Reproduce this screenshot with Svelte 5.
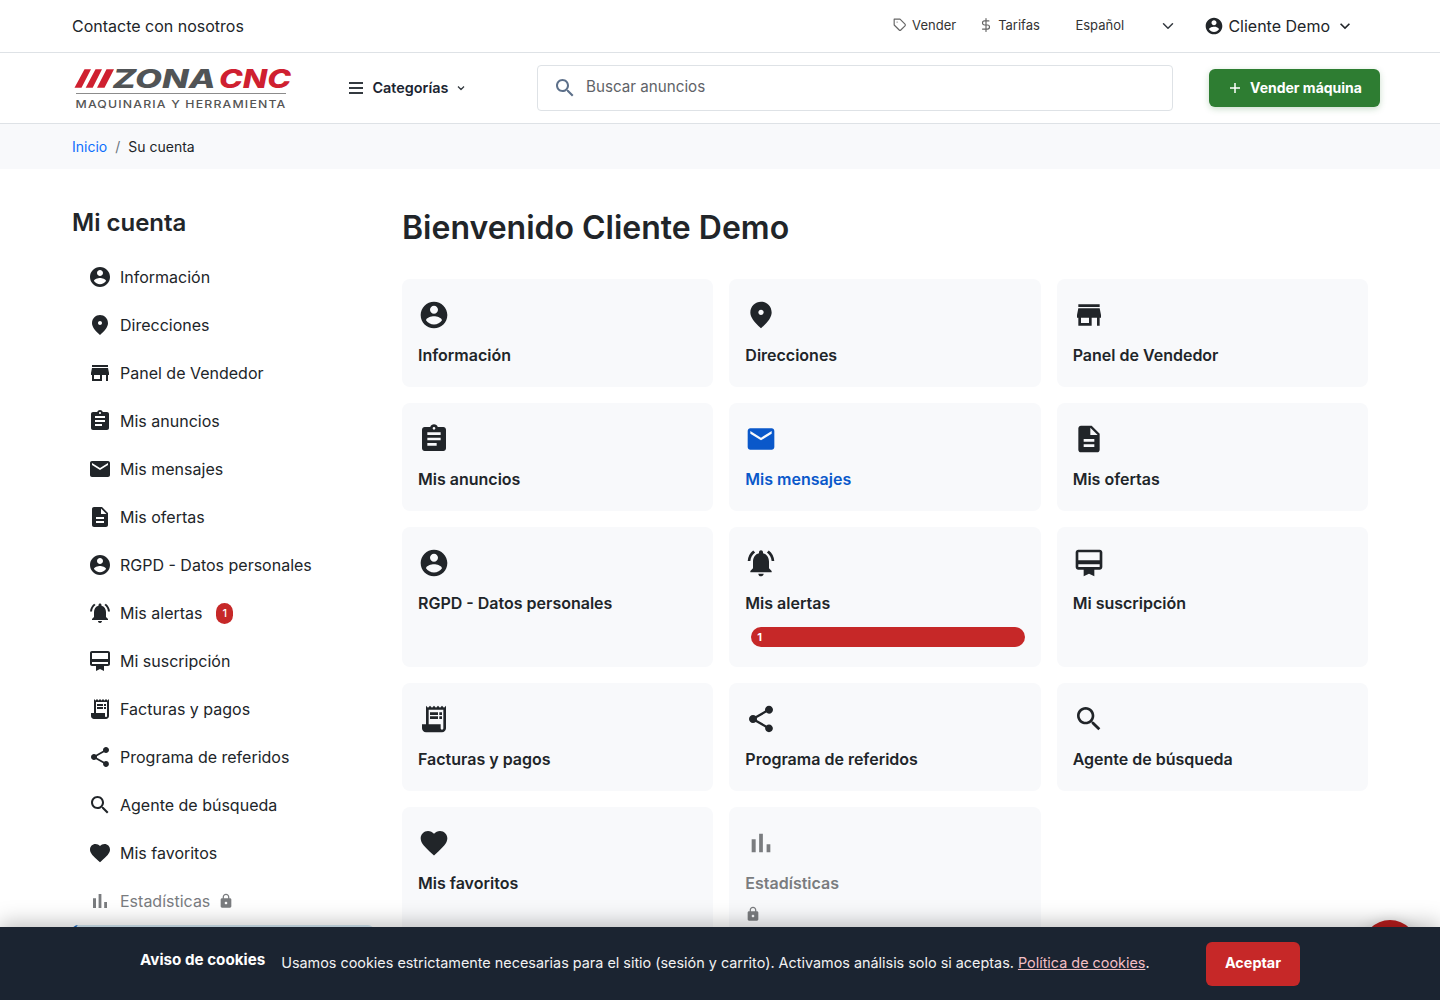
<script lang="ts">
	type Item = {
		label: string;
		icon: string;
		badge?: number;
		hover?: boolean;
		locked?: boolean;
	};

	/* 24x24 icon outlines */
	const icons: Record<string, string> = {
		account: 'M12 2C6.48 2 2 6.48 2 12s4.48 10 10 10 10-4.48 10-10S17.52 2 12 2zm0 3c1.66 0 3 1.34 3 3s-1.34 3-3 3-3-1.34-3-3 1.34-3 3-3zm0 14.2c-2.5 0-4.71-1.28-6-3.22.03-1.99 4-3.08 6-3.08 1.99 0 5.97 1.09 6 3.08-1.29 1.94-3.5 3.22-6 3.22z',
		place: 'M12 2c-4.2 0-8 3.22-8 8.2 0 3.32 2.67 7.25 8 11.8 5.33-4.55 8-8.48 8-11.8C20 5.22 16.2 2 12 2zm0 10c-1.1 0-2-.9-2-2s.9-2 2-2 2 .9 2 2-.9 2-2 2z',
		store: 'M20 4H4v2h16V4zm1 10v-2l-1-5H4l-1 5v2h1v6h10v-6h4v6h2v-6h1zm-9 4H6v-4h6v4z',
		assignment: 'M19 3h-4.18C14.4 1.84 13.3 1 12 1c-1.3 0-2.4.84-2.82 2H5c-1.1 0-2 .9-2 2v14c0 1.1.9 2 2 2h14c1.1 0 2-.9 2-2V5c0-1.1-.9-2-2-2zm-7 0c.55 0 1 .45 1 1s-.45 1-1 1-1-.45-1-1 .45-1 1-1zm2 14H7v-2h7v2zm3-4H7v-2h10v2zm0-4H7V7h10v2z',
		mail: 'M20 4H4c-1.1 0-1.99.9-1.99 2L2 18c0 1.1.9 2 2 2h16c1.1 0 2-.9 2-2V6c0-1.1-.9-2-2-2zm0 4l-8 5-8-5V6l8 5 8-5v2z',
		description: 'M14 2H6c-1.1 0-1.99.9-1.99 2L4 20c0 1.1.89 2 1.99 2H18c1.1 0 2-.9 2-2V8l-6-6zm2 16H8v-2h8v2zm0-4H8v-2h8v2zm-3-5V3.5L18.5 9H13z',
		alert: 'M7.58 4.08L6.15 2.65C3.75 4.48 2.17 7.3 2.03 10.5h2c.15-2.65 1.51-4.97 3.55-6.42zm12.39 6.42h2c-.15-3.2-1.73-6.02-4.12-7.85l-1.42 1.43c2.02 1.45 3.39 3.77 3.54 6.42zM18 11c0-3.07-1.64-5.64-4.5-6.32V4c0-.83-.67-1.5-1.5-1.5s-1.5.67-1.5 1.5v.68C7.63 5.36 6 7.92 6 11v5l-2 2v1h16v-1l-2-2v-5zm-6 11c.14 0 .27-.01.4-.04.65-.14 1.18-.58 1.44-1.18.1-.24.15-.5.15-.78h-4c.01 1.1.9 2 2.01 2z',
		membership: 'M20 2H4c-1.11 0-2 .89-2 2v11c0 1.11.89 2 2 2h4v5l4-2 4 2v-5h4c1.11 0 2-.89 2-2V4c0-1.11-.89-2-2-2zm0 13H4v-2h16v2zm0-5H4V4h16v6z',
		receipt: 'M19.5 3.5L18 2l-1.5 1.5L15 2l-1.5 1.5L12 2l-1.5 1.5L9 2 7.5 3.5 6 2v14H3v3c0 1.66 1.34 3 3 3h12c1.66 0 3-1.34 3-3V2l-1.5 1.5zM19 19c0 .55-.45 1-1 1s-1-.45-1-1v-3H8V5h11v14zM9 7h6v2H9zM16 7h2v2h-2zM9 10h6v2H9zM16 10h2v2h-2z',
		share: 'M18 16.08c-.76 0-1.44.3-1.96.77L8.91 12.7c.05-.23.09-.46.09-.7s-.04-.47-.09-.7l7.05-4.11c.54.5 1.25.81 2.04.81 1.66 0 3-1.34 3-3s-1.34-3-3-3-3 1.34-3 3c0 .24.04.47.09.7L8.04 9.81C7.5 9.31 6.79 9 6 9c-1.66 0-3 1.34-3 3s1.34 3 3 3c.79 0 1.5-.31 2.04-.81l7.12 4.16c-.05.21-.08.43-.08.65 0 1.61 1.31 2.92 2.92 2.92s2.92-1.31 2.92-2.92-1.31-2.92-2.92-2.92z',
		search: 'M15.5 14h-.79l-.28-.27C15.41 12.59 16 11.11 16 9.5 16 5.91 13.09 3 9.5 3S3 5.91 3 9.5 5.91 16 9.5 16c1.61 0 3.09-.59 4.23-1.57l.27.28v.79l5 4.99L20.49 19l-4.99-5zm-6 0C7.01 14 5 11.99 5 9.5S7.01 5 9.5 5 14 7.01 14 9.5 11.99 14 9.5 14z',
		heart: 'M12 21.35l-1.45-1.32C5.4 15.36 2 12.28 2 8.5 2 5.42 4.42 3 7.5 3c1.74 0 3.41.81 4.5 2.09C13.09 3.81 14.76 3 16.5 3 19.58 3 22 5.42 22 8.5c0 3.78-3.4 6.86-8.55 11.54L12 21.35z',
		chart: 'M5 9.2h3V19H5zM10.6 5h2.8v14h-2.8zm5.6 8H19v6h-2.8z',
		lock: 'M18 8h-1V6c0-2.76-2.24-5-5-5S7 3.24 7 6v2H6c-1.1 0-2 .9-2 2v10c0 1.1.9 2 2 2h12c1.1 0 2-.9 2-2V10c0-1.1-.9-2-2-2zm-6 9c-1.1 0-2-.9-2-2s.9-2 2-2 2 .9 2 2-.9 2-2 2zm3.1-9H8.9V6c0-1.71 1.39-3.1 3.1-3.1 1.71 0 3.1 1.39 3.1 3.1v2z',
		expand: 'M16.59 8.59L12 13.17 7.41 8.59 6 10l6 6 6-6z'
	};

	const items: Item[] = [
		{ label: 'Información', icon: 'account' },
		{ label: 'Direcciones', icon: 'place' },
		{ label: 'Panel de Vendedor', icon: 'store' },
		{ label: 'Mis anuncios', icon: 'assignment' },
		{ label: 'Mis mensajes', icon: 'mail', hover: true },
		{ label: 'Mis ofertas', icon: 'description' },
		{ label: 'RGPD - Datos personales', icon: 'account' },
		{ label: 'Mis alertas', icon: 'alert', badge: 1 },
		{ label: 'Mi suscripción', icon: 'membership' },
		{ label: 'Facturas y pagos', icon: 'receipt' },
		{ label: 'Programa de referidos', icon: 'share' },
		{ label: 'Agente de búsqueda', icon: 'search' },
		{ label: 'Mis favoritos', icon: 'heart' },
		{ label: 'Estadísticas', icon: 'chart', locked: true }
	];
</script>

{#snippet icon(name: string, size: number)}
	<svg class="icon" width={size} height={size} viewBox="0 0 24 24"><path d={icons[name]} /></svg>
{/snippet}

<div class="page">
	<nav class="topbar">
		<a class="contact" href="#contacto">Contacte con nosotros</a>
		<div class="toplinks">
			<a class="toplink vender" href="#vender">
				<svg class="line" width="14" height="14" viewBox="0 0 24 24"><path d="M20.6 13.4l-7.2 7.2a2 2 0 0 1-2.8 0L2 12V2h10l8.6 8.6a2 2 0 0 1 0 2.8zM7 7h.01" /></svg>
				Vender
			</a>
			<a class="toplink tarifas" href="#tarifas">
				<svg class="line" width="14" height="14" viewBox="0 0 24 24"><path d="M12 1v22M17 5H9.5a3.5 3.5 0 0 0 0 7h5a3.5 3.5 0 0 1 0 7H6" /></svg>
				Tarifas
			</a>
			<button class="lang">
				Español
				<svg width="12" height="12" viewBox="0 0 16 16"><path d="M2 5l6 6 6-6" /></svg>
			</button>
			<button class="user">
				{@render icon('account', 20)}
				<span>Cliente Demo</span>
				{@render icon('expand', 20)}
			</button>
		</div>
	</nav>

	<header class="header">
		<a class="logo" href="#inicio" aria-label="Zona CNC">
			<svg width="222" height="60" viewBox="0 -8 222 60">
				<g class="red">
					<path d="M10.500 3.200H17L7.500 21.800H.5zM21.500 3.200H28L18.700 21.800h-7zM32.500 3.200h7.500L30.500 21.800h-7.500z" />
					<text class="brand" x="145" y="21.800" textLength="72" lengthAdjust="spacingAndGlyphs">CNC</text>
				</g>
				<text class="brand grey" x="38.500" y="21.800" textLength="103" lengthAdjust="spacingAndGlyphs">ZONA</text>
				<path class="rule" d="M2 27.500h210" />
				<text class="tagline" x="1.500" y="41.700" textLength="211" lengthAdjust="spacingAndGlyphs">MAQUINARIA Y HERRAMIENTA</text>
			</svg>
		</a>
		<button class="categories">
			<svg width="16" height="16" viewBox="0 0 16 16"><path d="M1 3h14M1 8h14M1 13h14" /></svg>
			Categorías
			<svg class="chev" width="8" height="8" viewBox="0 0 8 8"><path d="M1 2.500l3 3 3-3" /></svg>
		</button>
		<div class="search">
			{@render icon('search', 24)}
			<span>Buscar anuncios</span>
		</div>
		<button class="sell">
			<svg width="12" height="12" viewBox="0 0 12 12"><path d="M6 1v10M1 6h10" /></svg>
			Vender máquina
		</button>
	</header>

	<div class="breadcrumb">
		<a href="#inicio">Inicio</a><span class="sep">/</span><span>Su cuenta</span>
	</div>

	<div class="content">
		<aside class="sidebar">
			<h2>Mi cuenta</h2>
			<ul>
				{#each items as item}
					<li class:locked={item.locked}>
						{@render icon(item.icon, 24)}
						<span>{item.label}</span>
						{#if item.badge}<span class="badge">{item.badge}</span>{/if}
						{#if item.locked}{@render icon('lock', 16)}{/if}
					</li>
				{/each}
			</ul>
			<div class="notice"></div>
		</aside>

		<main>
			<h1>Bienvenido Cliente Demo</h1>
			<div class="cards">
				{#each items as item}
					<a class="card" class:hover={item.hover} class:locked={item.locked} href="#cuenta">
						{@render icon(item.icon, 32)}
						<span class="label">{item.label}</span>
						{#if item.badge}<span class="badge">{item.badge}</span>{/if}
						{#if item.locked}{@render icon('lock', 16)}{/if}
					</a>
				{/each}
			</div>
		</main>
	</div>

	<div class="fab"></div>

	<div class="cookies">
		<strong>Aviso de cookies</strong>
		<p>Usamos cookies estrictamente necesarias para el sitio (sesión y carrito). Activamos análisis solo si aceptas. <a href="#cookies">Política de cookies</a>.</p>
		<button>Aceptar</button>
	</div>
</div>

<style>
	:global(body) {
		overflow: hidden;
	}

	.page {
		position: relative;
		height: 1000px;
		overflow: hidden;
		background: #fff;
		color: #212529;
		font: 16px/24px Inter, sans-serif;
	}

	.page * {
		box-sizing: border-box;
	}

	a {
		color: inherit;
		text-decoration: none;
	}

	button {
		border: 0;
		padding: 0;
		background: none;
		color: inherit;
		font: inherit;
	}

	svg {
		display: block;
		flex: none;
	}

	.icon {
		fill: currentColor;
	}

	.topbar {
		display: flex;
		align-items: center;
		justify-content: space-between;
		height: 53px;
		padding: 0 85px 0 72px;
		border-bottom: 1px solid #dee2e6;
	}

	.toplinks,
	.toplink,
	.user {
		display: flex;
		align-items: center;
	}

	.toplink,
	.lang {
		font-size: 13px;
		line-height: 20px;
		padding-bottom: 2px;
		color: #333;
	}

	.toplink {
		gap: 5px;
	}

	.vender {
		margin-right: 23px;
	}

	.tarifas {
		margin-right: 35.500px;
	}

	.line {
		fill: none;
		stroke: #666;
		stroke-width: 2;
		stroke-linecap: round;
		stroke-linejoin: round;
	}

	.lang {
		display: flex;
		align-items: center;
		justify-content: space-between;
		width: 99px;
		margin-right: 30px;
	}

	.lang svg {
		position: relative;
		top: 1px;
	}

	.lang svg,
	.categories svg {
		fill: none;
		stroke: #343a40;
		stroke-width: 2;
		stroke-linecap: round;
		stroke-linejoin: round;
	}

	.user span {
		margin: 0 5px 0 4px;
	}

	.header {
		display: flex;
		align-items: center;
		height: 71px;
		padding: 0 60px 0 74px;
		border-bottom: 1px solid #dee2e6;
	}

	.logo {
		width: 222px;
		margin-right: 52px;
	}

	.brand {
		font: italic 800 25.600px Inter, sans-serif;
	}

	.red {
		fill: #cf2030;
	}

	.grey {
		fill: #515456;
	}

	.rule {
		stroke: #8c8c8c;
	}

	.tagline {
		font: 500 10.600px Inter, sans-serif;
		letter-spacing: 1px;
		fill: #555;
	}

	.categories {
		display: flex;
		align-items: center;
		width: 189px;
		font-size: 14.4px;
		font-weight: 600;
		color: #1b2431;
	}

	.categories svg {
		margin-right: 8.500px;
		stroke-linecap: butt;
	}

	.categories .chev {
		margin: 0 0 0 9px;
		stroke-width: 1.3;
	}

	.search {
		display: flex;
		align-items: center;
		width: 636px;
		height: 46px;
		margin-right: 36px;
		padding-left: 15px;
		border: 1px solid #dee2e6;
		border-radius: 4px;
		color: #5f6368;
		font-size: 15.2px;
	}

	.search .icon {
		margin-right: 9px;
		color: #5d708a;
	}

	.search span {
		padding-bottom: 2px;
	}

	.sell {
		display: flex;
		align-items: center;
		justify-content: center;
		gap: 9px;
		width: 171px;
		height: 38px;
		padding-left: 2px;
		border-radius: 6px;
		background: #2e7d32;
		box-shadow: 0 2px 6px rgba(46, 125, 50, 0.25);
		color: #fff;
		font-size: 14px;
		font-weight: 700;
	}

	.sell svg {
		stroke: #fff;
		stroke-width: 1.500;
	}

	.breadcrumb {
		height: 45px;
		padding: 0 72px;
		background: #f8f9fb;
		font-size: 14px;
		line-height: 46px;
	}

	.breadcrumb a {
		color: #0d6efd;
	}

	.sep {
		margin: 0 8px;
		color: #6c757d;
	}

	.content {
		display: grid;
		grid-template-columns: 302px 966px;
		gap: 28px;
		padding: 0 72px;
	}

	h1,
	h2 {
		margin: 0;
		font-weight: 600;
	}

	h2 {
		padding-top: 38px;
		font-size: 24px;
		line-height: 32px;
	}

	ul {
		margin: 14px 0 0;
		padding: 0;
		list-style: none;
	}

	li {
		display: flex;
		align-items: center;
		height: 48px;
		padding-left: 16px;
	}

	li span {
		margin-left: 8px;
	}

	li .badge {
		height: 21px;
		margin-left: 14px;
		padding: 0 6px;
		border-radius: 10px;
		font-size: 11px;
		font-weight: 500;
	}

	.badge {
		background: #c62828;
		color: #fff;
		line-height: 20px;
	}

	li .icon + span + .icon {
		margin-left: 8px;
	}

	.locked {
		color: #7a7c7f;
	}

	.notice {
		height: 80px;
		border-left: 4px solid #1565c0;
		border-radius: 6px;
		background: #d3e8f3;
	}

	h1 {
		padding-top: 39px;
		font-size: 32px;
		line-height: 40px;
	}

	.cards {
		display: grid;
		grid-template-columns: repeat(3, 1fr);
		gap: 16px;
		margin-top: 31px;
	}

	.card {
		display: flex;
		flex-direction: column;
		min-height: 108px;
		padding: 20px 16px;
		border-radius: 8px;
		background: #f8f9fb;
		font-weight: 600;
	}

	.card.hover {
		color: #0a58ca;
	}

	.label {
		margin-top: 12px;
	}

	.card .badge {
		height: 20px;
		margin: 12px 0 0 6px;
		padding: 0 6px;
		border-radius: 10px;
		font-size: 11px;
		font-weight: 700;
	}

	.label + .icon {
		margin-top: 11px;
	}

	.fab {
		position: absolute;
		top: 920px;
		left: 1362px;
		width: 56px;
		height: 56px;
		border-radius: 50%;
		background: #b71c1c;
		box-shadow: 0 4px 16px rgba(0, 0, 0, 0.25);
	}

	.cookies {
		position: absolute;
		right: 0;
		bottom: 0;
		left: 0;
		display: flex;
		align-items: center;
		height: 73px;
		padding: 0 140px;
		background: #1b2431;
		box-shadow: 0 -4px 20px rgba(0, 0, 0, 0.25);
		color: #f1f1f1;
		font-size: 14.4px;
	}

	.cookies strong {
		margin-right: 16px;
		padding-bottom: 7px;
		font-size: 15.2px;
		color: #fff;
	}

	.cookies p {
		margin: 0;
		padding-bottom: 1px;
		white-space: nowrap;
	}

	.cookies a {
		color: #f3bfc4;
		text-decoration: underline;
	}

	.cookies button {
		width: 94px;
		height: 44px;
		margin-left: auto;
		padding-bottom: 1px;
		border-radius: 6px;
		background: #c62828;
		color: #fff;
		font-weight: 700;
	}
</style>
